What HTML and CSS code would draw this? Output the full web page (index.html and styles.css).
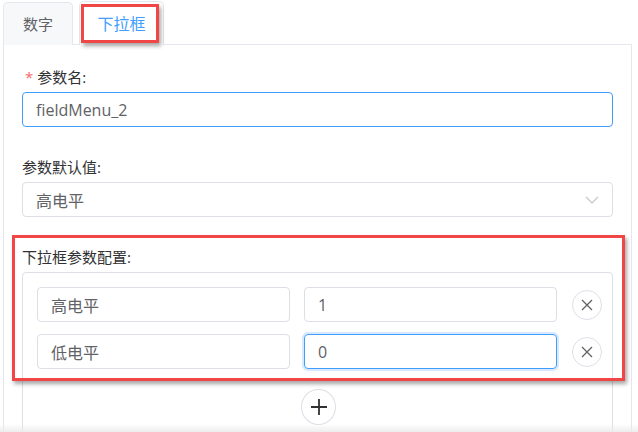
FILE: index.html
```html
<!DOCTYPE html>
<html lang="zh">
<head>
<meta charset="utf-8">
<link rel="stylesheet" href="styles.css">
</head>
<body>
<div class="page">
  <div class="tabs">
    <div class="tab">数字</div>
    <div class="tab active">下拉框</div>
  </div>
  <div class="content">
    <div class="form-item">
      <div class="label"><span class="req">*</span> 参数名:</div>
      <div class="input focus">fieldMenu_2</div>
    </div>
    <div class="form-item">
      <div class="label">参数默认值:</div>
      <div class="input select">
        <span>高电平</span>
        <svg class="chev" width="14" height="8" viewBox="0 0 14 8"><path d="M1 1 L7 7 L13 1" fill="none" stroke="#c0c4cc" stroke-width="1.1"/></svg>
      </div>
    </div>
    <div class="form-item">
      <div class="label">下拉框参数配置:</div>
      <div class="box">
        <div class="row">
          <div class="input cell">高电平</div>
          <div class="input cell">1</div>
          <div class="circle"><svg width="14" height="14" viewBox="0 0 14 14"><path d="M2 2 L12 12 M12 2 L2 12" stroke="#606266" stroke-width="1.3"/></svg></div>
        </div>
        <div class="row">
          <div class="input cell">低电平</div>
          <div class="input cell focus glow">0</div>
          <div class="circle"><svg width="14" height="14" viewBox="0 0 14 14"><path d="M2 2 L12 12 M12 2 L2 12" stroke="#606266" stroke-width="1.3"/></svg></div>
        </div>
        <div class="add-wrap">
          <div class="circle add"><svg width="18" height="18" viewBox="0 0 18 18"><path d="M9 1 V17 M1 9 H17" stroke="#303133" stroke-width="1.8"/></svg></div>
        </div>
      </div>
    </div>
  </div>
  <div class="mark mark-tab"></div>
  <div class="mark mark-box"></div>
  <div class="fade"></div>
</div>
</body>
</html>
```

FILE: styles.css
```css
* { box-sizing: border-box; }
html, body { margin: 0; padding: 0; background: #fff; }
body {
  width: 638px;
  height: 432px;
  overflow: hidden;
  font-family: "Open Sans", "Noto Sans CJK SC", sans-serif;
  color: #303133;
}
.page {
  position: relative;
  width: 638px;
  height: 432px;
  padding-left: 3px;
}
.tabs {
  width: 629px;
  height: 45px;
  display: flex;
  align-items: flex-end;
  gap: 6px;
  border-bottom: 1px solid #e4e7ed;
}
.tab {
  height: 43px;
  margin-bottom: -1px;
  border: 1px solid #e4e7ed;
  border-bottom: none;
  border-radius: 5px 5px 0 0;
  background: #f7f8fa;
  font-size: 15px;
  color: #606266;
  display: flex;
  align-items: center;
  justify-content: center;
  width: 70px;
  padding-bottom: 2px;
}
.tab.active {
  width: 85px;
  background: #fff;
  color: #409eff;
  font-size: 16px;
  height: 44px;
}
.content {
  width: 629px;
  height: 400px;
  border-left: 1px solid #e4e7ed;
  border-right: 1px solid #e4e7ed;
  padding: 22px 18px 0 18px;
}
.form-item { margin-bottom: 30px; }
.label {
  font-size: 15px;
  line-height: 20px;
  height: 20px;
  margin-bottom: 5px;
  color: #303133;
}
.req { color: #f56c6c; margin-left: 3px; }
.input {
  height: 35px;
  width: 591px;
  border: 1px solid #dcdfe6;
  border-radius: 4px;
  padding: 0 13px;
  display: flex;
  align-items: center;
  font-size: 16px;
  color: #606266;
}
.input.focus { border-color: #409eff; }
.input.glow { box-shadow: 0 0 0 2px #d6e9ff; }
.select { justify-content: space-between; }
.chev { margin-right: 0; }
.box {
  width: 591px;
  height: 180px;
  border: 1px solid #dcdfe6;
  border-radius: 4px;
  padding: 14px 10px 0 14px;
}
.row {
  display: flex;
  align-items: center;
  gap: 14px;
  margin-bottom: 12px;
}
.input.cell { width: 253px; }
.circle {
  width: 30px;
  height: 30px;
  border: 1px solid #dcdfe6;
  border-radius: 50%;
  display: flex;
  align-items: center;
  justify-content: center;
  margin-left: 1px;
}
.add-wrap {
  display: flex;
  justify-content: center;
  padding-top: 8px;
  padding-right: 2px;
}
.circle.add {
  width: 35px;
  height: 36px;
  margin: 0;
}
.mark {
  position: absolute;
  border: 3px solid #f04646;
  box-shadow: 2px 3px 4px rgba(0,0,0,0.35);
}
.mark-tab { left: 81px; top: 4px; width: 78px; height: 39px; }
.mark-box { left: 12px; top: 235px; width: 613px; height: 146px; }
.fade {
  position: absolute;
  left: 0;
  bottom: 0;
  width: 638px;
  height: 8px;
  background: linear-gradient(to bottom, rgba(240,240,240,0), rgba(235,235,235,0.9));
}
```
